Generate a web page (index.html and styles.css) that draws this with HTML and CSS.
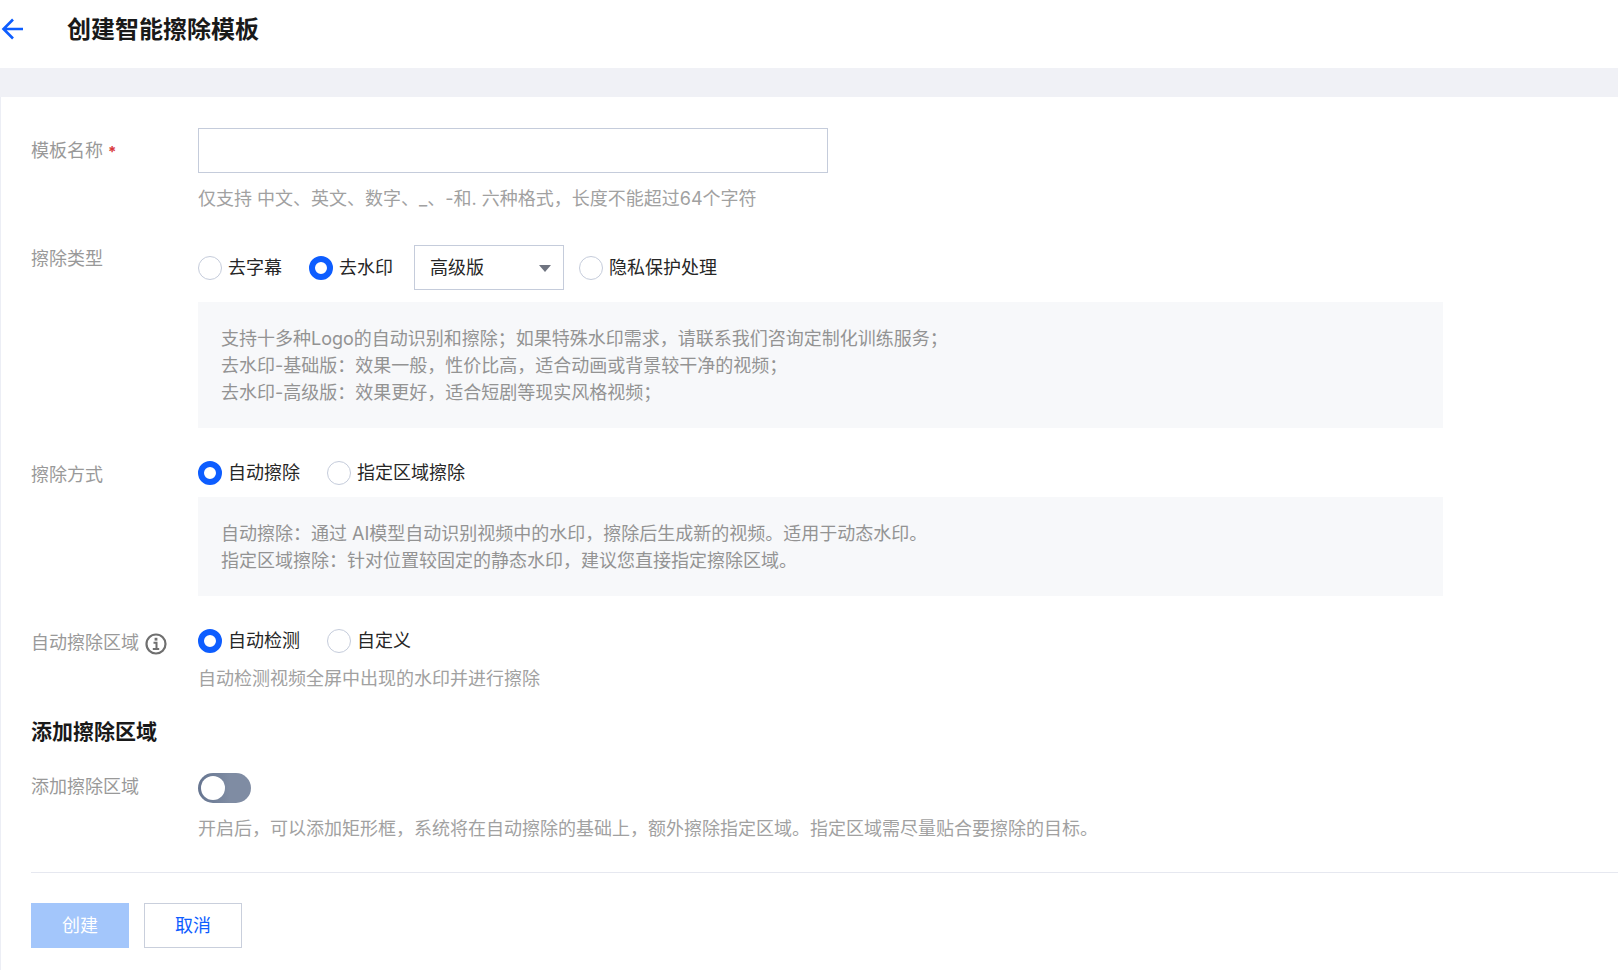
FILE: index.html
```html
<!DOCTYPE html>
<html lang="zh-CN">
<head>
<meta charset="utf-8">
<title>创建智能擦除模板</title>
<link rel="stylesheet" href="styles.css">
</head>
<body>
<header class="topbar">
  <svg class="back" width="24" height="24" viewBox="0 0 24 24"><path d="M23 12H4M13 2.500 3.500 12l9.500 9.500" fill="none" stroke="#0d5dff" stroke-width="2.600"/></svg>
  <h1 class="title">创建智能擦除模板</h1>
</header>
<div class="band"></div>
<main class="card">
  <div class="row row-name">
    <div class="label">模板名称<span class="req">*</span></div>
    <div class="body">
      <div class="input"></div>
      <p class="hint hint-name">仅支持 中文、英文、数字、_、-和. 六种格式，长度不能超过64个字符</p>
    </div>
  </div>
  <div class="row row-type">
    <div class="label">擦除类型</div>
    <div class="body">
      <div class="choices">
        <span class="radio"><i class="dot"></i>去字幕</span>
        <span class="radio"><i class="dot on"></i>去水印</span>
        <span class="select">高级版<i class="caret"></i></span>
        <span class="radio"><i class="dot"></i>隐私保护处理</span>
      </div>
      <div class="tip tip-type">支持十多种Logo的自动识别和擦除；如果特殊水印需求，请联系我们咨询定制化训练服务；<br>去水印-基础版：效果一般，性价比高，适合动画或背景较干净的视频；<br>去水印-高级版：效果更好，适合短剧等现实风格视频；</div>
    </div>
  </div>
  <div class="row row-mode">
    <div class="label label-low">擦除方式</div>
    <div class="body">
      <div class="choices choices-tall">
        <span class="radio"><i class="dot on"></i>自动擦除</span>
        <span class="radio"><i class="dot"></i>指定区域擦除</span>
      </div>
      <div class="tip tip-mode">自动擦除：通过 AI模型自动识别视频中的水印，擦除后生成新的视频。适用于动态水印。<br>指定区域擦除：针对位置较固定的静态水印，建议您直接指定擦除区域。</div>
    </div>
  </div>
  <div class="row row-area">
    <div class="label label-low">自动擦除区域<svg class="info" width="22" height="22" viewBox="0 0 22 22"><circle cx="11" cy="11" r="9.500" fill="none" stroke="#6f6f6f" stroke-width="2.200"/><rect x="9.600" y="4.800" width="2.800" height="2.800" fill="#6f6f6f"/><path d="M8.500 9.800h3v6M7.800 16h6.400" fill="none" stroke="#6f6f6f" stroke-width="2"/></svg></div>
    <div class="body">
      <div class="choices choices-tall">
        <span class="radio"><i class="dot on"></i>自动检测</span>
        <span class="radio"><i class="dot"></i>自定义</span>
      </div>
      <p class="hint hint-area">自动检测视频全屏中出现的水印并进行擦除</p>
    </div>
  </div>
  <h2 class="section">添加擦除区域</h2>
  <div class="row row-add">
    <div class="label">添加擦除区域</div>
    <div class="body">
      <span class="switch"><i class="knob"></i></span>
      <p class="hint hint-add">开启后，可以添加矩形框，系统将在自动擦除的基础上，额外擦除指定区域。指定区域需尽量贴合要擦除的目标。</p>
    </div>
  </div>
  <footer class="actions">
    <button class="btn btn-primary" type="button">创建</button>
    <button class="btn btn-plain" type="button">取消</button>
  </footer>
</main>
</body>
</html>
```
FILE: styles.css
```css
* { box-sizing: border-box; }
html, body { margin: 0; height: 100%; overflow: hidden; }
body {
  width: 1618px;
  height: 970px;
  background: #fff;
  color: #1f1f1f;
  font: 18px/27px "Inter", "Noto Sans CJK SC", sans-serif;
  display: flex;
  flex-direction: column;
}
.topbar { height: 68px; flex: none; display: flex; align-items: center; padding-bottom: 10px; }
.back { flex: none; }
.title { margin: 2px 0 0 43px; font-size: 24px; line-height: 32px; font-weight: 600; color: #191919; }
.band { height: 29px; flex: none; background: #f0f1f6; }
.card { flex: 1; padding: 31px 0 0 30px; border-left: 1px solid #eceef5; }
.row { display: flex; }
.label { width: 167px; flex: none; color: #999; line-height: 27px; display: flex; align-items: center; height: 27px; }
.label-low { margin-top: 2px; }
.body { flex: 1; min-width: 0; }
.req { color: #d9383a; margin: 2px 0 0 5px; font-size: 15px; font-weight: 700; }
.info { margin-left: 6px; flex: none; position: relative; top: 1px; }
.input { width: 630px; height: 45px; border: 1px solid #c5ccdb; background: #fff; }
.row-name .label { margin-top: 9px; }
.hint { margin: 0; color: #a1a1a1; }
.hint-name { margin-top: 12px; }
.row-type { margin-top: 33px; }
.choices { display: flex; align-items: center; height: 45px; gap: 27px; }
.choices-tall { height: 27px; }
.radio { display: inline-flex; align-items: center; color: #262626; }
.dot { width: 24px; height: 24px; border-radius: 50%; border: 1px solid #c5ccdb; background: #fff; margin-right: 6px; flex: none; }
.dot.on { border: 6px solid #0d5dff; }
.select { width: 150px; height: 45px; margin: 0 -12px 0 -6px; border: 1px solid #c5ccdb; padding-left: 15px; display: flex; align-items: center; position: relative; color: #262626; }
.caret { position: absolute; right: 12px; top: 19px; border: 6px solid transparent; border-top: 7px solid #6f7480; border-bottom: 0; }
.tip { margin-top: 12px; background: #f7f8fa; color: #939393; padding: 23px 22px 22px 23px; width: 1245px; }
.row-mode { margin-top: 31px; }
.tip-mode { margin-top: 11px; }
.row-area { margin-top: 31px; }
.hint-area { margin-top: 11px; }
.section { margin: 26px 0 0; font-size: 21px; line-height: 28px; font-weight: 600; color: #191919; }
.row-add { margin-top: 27px; }
.switch { display: block; width: 53px; height: 30px; border-radius: 15px; background: linear-gradient(90deg, #667590 0%, #7f8ca3 60%); position: relative; }
.knob { position: absolute; left: 3px; top: 3px; width: 24px; height: 24px; border-radius: 50%; background: #fff; }
.hint-add { margin-top: 12px; }
.actions { margin-top: 30px; border-top: 1px solid #e6e8f0; padding-top: 30px; display: flex; gap: 15px; }
.btn { width: 98px; height: 45px; font: inherit; padding: 0; border-radius: 0; }
.btn-primary { background: #a3c6fb; color: #fff; border: 0; }
.btn-plain { background: #fff; color: #0d5dff; border: 1px solid #c9cfdc; }
```
